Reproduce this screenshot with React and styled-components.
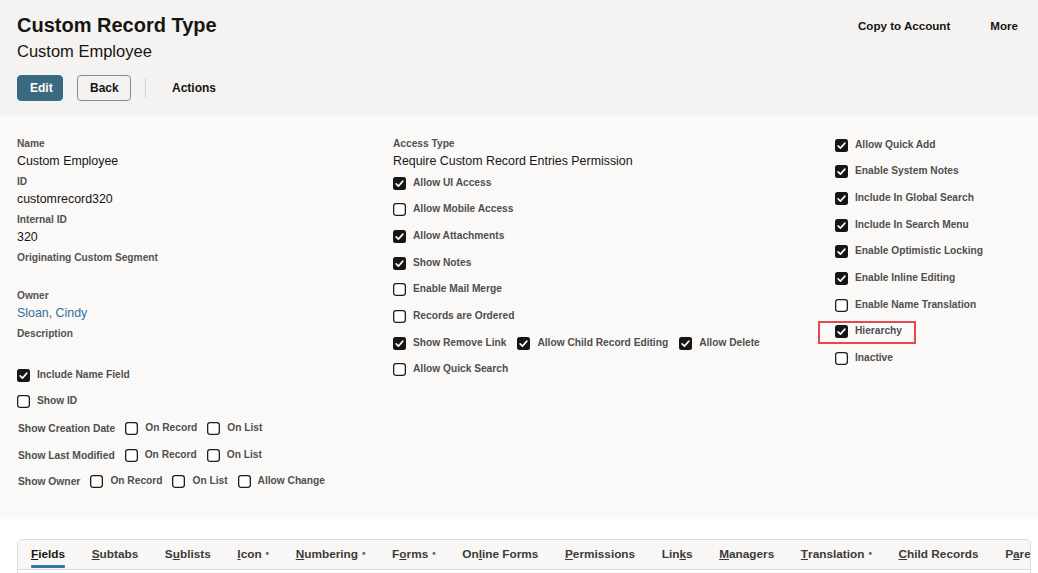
import React from "react";
import styled, { createGlobalStyle, css } from "styled-components";

const GlobalStyle = createGlobalStyle`
  html, body {
    margin: 0;
    padding: 0;
    background: #ffffff;
    font-family: "Liberation Sans", Arial, sans-serif;
    color: #161513;
  }
  * { box-sizing: border-box; }
`;

function Box({ checked }) {
  return (
    <BoxSvg width="13" height="13" viewBox="0 0 13 13">
      {checked ? (
        <>
          <rect x="0" y="0" width="13" height="13" rx="2.5" fill="#161616" />
          <path d="M3.1 6.9 L5.4 9.1 L9.9 4.1" fill="none" stroke="#fff" strokeWidth="1.6" strokeLinecap="round" strokeLinejoin="round" />
        </>
      ) : (
        <rect x="0.65" y="0.65" width="11.7" height="11.7" rx="2.5" fill="#fff" stroke="#1d1d1d" strokeWidth="1.3" />
      )}
    </BoxSvg>
  );
}

function Check({ label, checked, highlight }) {
  return (
    <CheckItem $highlight={highlight}>
      <Box checked={checked} />
      <CheckText>{label}</CheckText>
    </CheckItem>
  );
}

function Field({ label, value, link }) {
  return (
    <FieldBlock>
      <Label>{label}</Label>
      <Value $link={link}>{value}</Value>
    </FieldBlock>
  );
}

const tabs = [
  { pre: "", key: "F", rest: "ields", active: true },
  { pre: "", key: "S", rest: "ubtabs" },
  { pre: "S", key: "u", rest: "blists" },
  { pre: "", key: "I", rest: "con", dot: true },
  { pre: "", key: "N", rest: "umbering", dot: true },
  { pre: "F", key: "o", rest: "rms", dot: true },
  { pre: "On", key: "l", rest: "ine Forms" },
  { pre: "", key: "P", rest: "ermissions" },
  { pre: "Lin", key: "k", rest: "s" },
  { pre: "", key: "M", rest: "anagers" },
  { pre: "", key: "T", rest: "ranslation", dot: true },
  { pre: "", key: "C", rest: "hild Records" },
  { pre: "P", key: "a", rest: "rent" },
];

export default function App() {
  return (
    <>
      <GlobalStyle />
      <Page>
        <Header>
          <TitleRow>
            <Title>Custom Record Type</Title>
            <TopLinks>
              <TopLink>Copy to Account</TopLink>
              <TopLink>More</TopLink>
            </TopLinks>
          </TitleRow>
          <Subtitle>Custom Employee</Subtitle>
          <ButtonRow>
            <Button $primary>Edit</Button>
            <Button>Back</Button>
            <Divider />
            <ActionsLink>Actions</ActionsLink>
          </ButtonRow>
        </Header>

        <Body>
          <Column>
            <Field label="Name" value="Custom Employee" />
            <Field label="ID" value="customrecord320" />
            <Field label="Internal ID" value="320" />
            <Field label="Originating Custom Segment" value="" />
            <Field label="Owner" value="Sloan, Cindy" link />
            <Field label="Description" value="" />
            <CheckList $offset={1}>
              <Check label="Include Name Field" checked />
              <Check label="Show ID" />
              <InlineRow>
                <RowLabel>Show Creation Date</RowLabel>
                <Check label="On Record" />
                <Check label="On List" />
              </InlineRow>
              <InlineRow>
                <RowLabel>Show Last Modified</RowLabel>
                <Check label="On Record" />
                <Check label="On List" />
              </InlineRow>
              <InlineRow>
                <RowLabel>Show Owner</RowLabel>
                <Check label="On Record" />
                <Check label="On List" />
                <Check label="Allow Change" />
              </InlineRow>
            </CheckList>
          </Column>

          <Column>
            <Field label="Access Type" value="Require Custom Record Entries Permission" />
            <CheckList $offset={-1}>
              <Check label="Allow UI Access" checked />
              <Check label="Allow Mobile Access" />
              <Check label="Allow Attachments" checked />
              <Check label="Show Notes" checked />
              <Check label="Enable Mail Merge" />
              <Check label="Records are Ordered" />
              <InlineRow $wide>
                <Check label="Show Remove Link" checked />
                <Check label="Allow Child Record Editing" checked />
                <Check label="Allow Delete" checked />
              </InlineRow>
              <Check label="Allow Quick Search" />
            </CheckList>
          </Column>

          <Column $shift>
            <CheckList>
              <Check label="Allow Quick Add" checked />
              <Check label="Enable System Notes" checked />
              <Check label="Include In Global Search" checked />
              <Check label="Include In Search Menu" checked />
              <Check label="Enable Optimistic Locking" checked />
              <Check label="Enable Inline Editing" checked />
              <Check label="Enable Name Translation" />
              <Check label="Hierarchy" checked highlight />
              <Check label="Inactive" />
            </CheckList>
          </Column>
        </Body>

        <TabSection>
          <TabBox>
            <TabBar>
              {tabs.map((t) => (
                <Tab key={t.pre + t.key + t.rest} $active={t.active}>
                  {t.pre}
                  <u>{t.key}</u>
                  {t.rest}
                  {t.dot && <Dot>•</Dot>}
                </Tab>
              ))}
            </TabBar>
          </TabBox>
        </TabSection>
      </Page>
    </>
  );
}

const Page = styled.div`
  width: 1038px;
  height: 573px;
  overflow: hidden;
  display: flex;
  flex-direction: column;
`;

const Header = styled.header`
  height: 116px;
  flex: none;
  background: #f4f3f1;
  padding: 13px 20px 0 17px;
`;

const TitleRow = styled.div`
  display: flex;
  align-items: center;
  justify-content: space-between;
`;

const Title = styled.h1`
  margin: 0;
  font-size: 20px;
  line-height: 24px;
  font-weight: 700;
  color: #161513;
`;

const TopLinks = styled.div`
  display: flex;
  gap: 40px;
  padding-top: 1px;
`;

const TopLink = styled.span`
  font-size: 11.6px;
  font-weight: 700;
  color: #161513;
`;

const Subtitle = styled.div`
  margin-top: 4px;
  font-size: 16.5px;
  line-height: 20px;
  color: #161513;
`;

const ButtonRow = styled.div`
  display: flex;
  align-items: center;
  margin-top: 14px;
`;

const Button = styled.button`
  height: 26px;
  padding: 0 12px;
  border-radius: 4px;
  font-family: "Liberation Sans", Arial, sans-serif;
  font-size: 12px;
  font-weight: 700;
  margin-right: 14px;
  cursor: pointer;
  ${(p) =>
    p.$primary
      ? css`
          width: 46px;
          background: #396a81;
          border: 1px solid #396a81;
          color: #ffffff;
        `
      : css`
          width: 54px;
          background: transparent;
          border: 1px solid #8d8b89;
          color: #161513;
        `}
`;

const Divider = styled.span`
  width: 1px;
  height: 20px;
  background: #d6d4d2;
  margin-right: 27px;
`;

const ActionsLink = styled.span`
  font-size: 12px;
  font-weight: 700;
  color: #161513;
  margin-left: -1px;
`;

const Body = styled.main`
  height: 403px;
  flex: none;
  background: #faf9f8;
  padding: 21px 0 0 17px;
  display: grid;
  grid-template-columns: 376px 442px 1fr;
  align-items: start;
`;

const Column = styled.div`
  display: flex;
  flex-direction: column;
  align-items: flex-start;
  margin-top: ${(p) => (p.$shift ? "-1px" : "0")};
`;

const FieldBlock = styled.div`
  display: flex;
  flex-direction: column;
  margin-bottom: 4px;
`;

const Label = styled.div`
  font-size: 10.2px;
  line-height: 14px;
  font-weight: 700;
  color: #525252;
`;

const Value = styled.div`
  font-size: 12.4px;
  line-height: 20px;
  height: 20px;
  white-space: nowrap;
  color: ${(p) => (p.$link ? "#30709e" : "#161513")};
`;

const CheckList = styled.div`
  display: flex;
  flex-direction: column;
  align-items: flex-start;
  gap: 8.7px;
  margin-top: ${(p) => (p.$offset ? `${p.$offset}px` : "0")};
`;

const CheckItem = styled.div`
  position: relative;
  display: flex;
  align-items: center;
  height: 18px;
  gap: 7px;
  ${(p) =>
    p.$highlight &&
    css`
      &::after {
        content: "";
        position: absolute;
        left: -17px;
        right: -14px;
        top: -2px;
        bottom: -3px;
        border: 2px solid #e8474f;
      }
    `}
`;

const BoxSvg = styled.svg`
  flex: none;
  display: block;
`;

const CheckText = styled.span`
  font-size: 10.2px;
  font-weight: 700;
  color: #4f4f4f;
  white-space: nowrap;
  margin-top: -2px;
`;

const InlineRow = styled.div`
  display: flex;
  align-items: center;
  height: 18px;
  gap: ${(p) => (p.$wide ? "11px" : "10px")};
`;

const RowLabel = styled.span`
  font-size: 10.3px;
  font-weight: 700;
  color: #4f4f4f;
  white-space: nowrap;
  margin-left: 1px;
`;

const TabSection = styled.section`
  flex: 1;
  background: #ffffff;
  padding: 20px 7px 0 17px;
  display: flex;
`;

const TabBox = styled.div`
  flex: 1;
  border: 1px solid #dddbd9;
  border-bottom: none;
  border-radius: 5px 5px 0 0;
  overflow: hidden;
`;

const TabBar = styled.nav`
  height: 30px;
  background: #f8f7f6;
  border-bottom: 1px solid #dddbd9;
  padding-left: 13px;
  display: flex;
  gap: 26.6px;
  white-space: nowrap;
`;

const Tab = styled.span`
  position: relative;
  display: flex;
  align-items: center;
  height: 29px;
  padding-bottom: 2px;
  font-size: 11.8px;
  font-weight: 700;
  color: ${(p) => (p.$active ? "#161513" : "#3b3a39")};
  ${(p) =>
    p.$active &&
    css`
      &::after {
        content: "";
        position: absolute;
        left: 0;
        right: 0;
        bottom: 1px;
        height: 3px;
        background: #2f7aa5;
        border-radius: 1px;
      }
    `}
`;

const Dot = styled.span`
  font-size: 10px;
  color: #6b6a69;
  margin-left: 4px;
`;
